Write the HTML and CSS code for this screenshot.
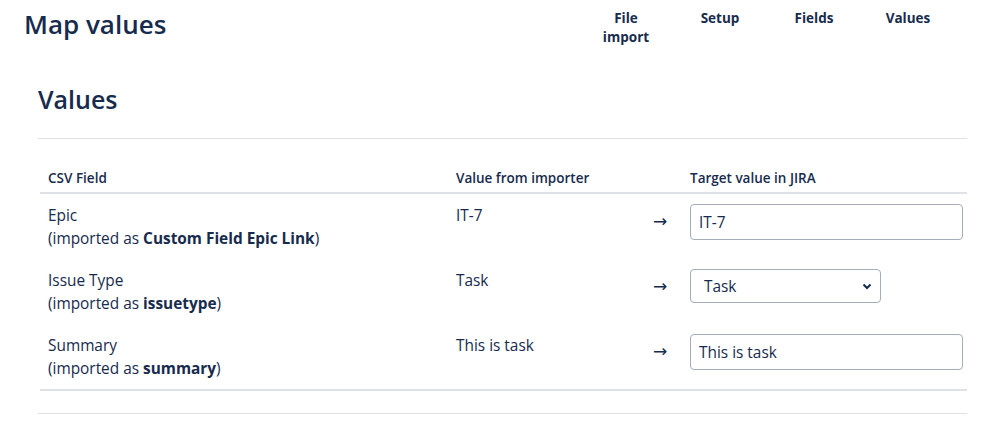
FILE: index.html
```html
<!DOCTYPE html>
<html lang="en">
<head>
    <meta charset="UTF-8">
    <title>Map values</title>
    <link rel="stylesheet" href="styles.css">
</head>
<body>
    <header class="page-header">
        <h1>Map values</h1>
        <nav class="steps">
            <span class="step">File import</span>
            <span class="step">Setup</span>
            <span class="step">Fields</span>
            <span class="step">Values</span>
        </nav>
    </header>

    <section class="values">
        <h2>Values</h2>
        <table class="mapping">
            <thead>
                <tr>
                    <th class="col-field">CSV Field</th>
                    <th class="col-value">Value from importer</th>
                    <th class="col-arrow"></th>
                    <th class="col-target">Target value in JIRA</th>
                </tr>
            </thead>
            <tbody>
                <tr>
                    <td>Epic<br>(imported as <b>Custom Field Epic Link</b>)</td>
                    <td>IT-7</td>
                    <td class="arrow">&rarr;</td>
                    <td><input type="text" class="target-input" value="IT-7"></td>
                </tr>
                <tr>
                    <td>Issue Type<br>(imported as <b>issuetype</b>)</td>
                    <td>Task</td>
                    <td class="arrow">&rarr;</td>
                    <td>
                        <div class="select-wrap">
                            <select class="target-select">
                                <option>Task</option>
                            </select>
                            <svg class="chevron" width="10" height="7" viewBox="0 0 10 7"><path d="M1.5 1.5 L5 5 L8.5 1.5" fill="none" stroke="#172B4D" stroke-width="2"/></svg>
                        </div>
                    </td>
                </tr>
                <tr>
                    <td>Summary<br>(imported as <b>summary</b>)</td>
                    <td>This is task</td>
                    <td class="arrow">&rarr;</td>
                    <td><input type="text" class="target-input" value="This is task"></td>
                </tr>
            </tbody>
        </table>
        <div class="footer-line"></div>
    </section>
</body>
</html>
```

FILE: styles.css
```css
body {
    margin: 0;
    font-family: "Open Sans", "Noto Sans", sans-serif;
    color: #172B4D;
    background: #fff;
}
.page-header {
    display: flex;
    justify-content: space-between;
    align-items: flex-start;
    padding: 6px 43px 0 24px;
    height: 70px;
}
.page-header h1 {
    margin: 0;
    font-size: 26px;
    font-weight: 600;
    line-height: 36px;
}
.steps {
    display: flex;
    padding-top: 3px;
}
.step {
    width: 94px;
    text-align: center;
    font-size: 13.5px;
    font-weight: 700;
    line-height: 19px;
    padding: 0 20px;
    box-sizing: border-box;
}
.values {
    padding: 6px 31px 0 38px;
}
.values h2 {
    margin: 0;
    font-size: 25px;
    font-weight: 600;
    line-height: 34px;
    padding-bottom: 22px;
    border-bottom: 1px solid #dfe1e6;
}
.mapping {
    width: calc(100% - 2px);
    margin: 22px 0 0 2px;
    border-collapse: collapse;
    table-layout: fixed;
    font-size: 15.4px;
    line-height: 23px;
}
.mapping th {
    text-align: left;
    font-size: 13.5px;
    font-weight: 600;
    padding: 6px 8px 2px;
    border-bottom: 2px solid #dfe1e6;
}
.mapping td {
    vertical-align: top;
    padding: 10px 8px 9px;
}
.mapping tbody tr:last-child td {
    border-bottom: 2px solid #dfe1e6;
}
.mapping b {
    font-weight: 700;
}
.col-field { width: 392px; }
.col-value { width: 176px; }
.col-arrow { width: 26px; }
.col-target { width: 269px; }
.mapping td.arrow {
    padding: 16px 0 0 13px;
    font-family: "DejaVu Sans", sans-serif;
    font-size: 17px;
    color: #172B4D;
}
.target-input {
    display: block;
    width: 273px;
    height: 36px;
    box-sizing: border-box;
    border: 1px solid #a5adba;
    border-radius: 4px;
    padding: 0 8px;
    font: inherit;
    font-size: 15.4px;
    color: #172B4D;
}
.select-wrap {
    position: relative;
    width: 191px;
}
.target-select {
    display: block;
    width: 191px;
    height: 34px;
    box-sizing: border-box;
    border: 1px solid #a5adba;
    border-radius: 4px;
    padding: 0 13px;
    font: inherit;
    font-size: 15.4px;
    color: #172B4D;
    background: #fff;
    appearance: none;
}
.chevron {
    position: absolute;
    right: 9px;
    top: 14px;
}
.footer-line {
    margin-top: 22px;
    border-top: 1px solid #dfe1e6;
}
```
